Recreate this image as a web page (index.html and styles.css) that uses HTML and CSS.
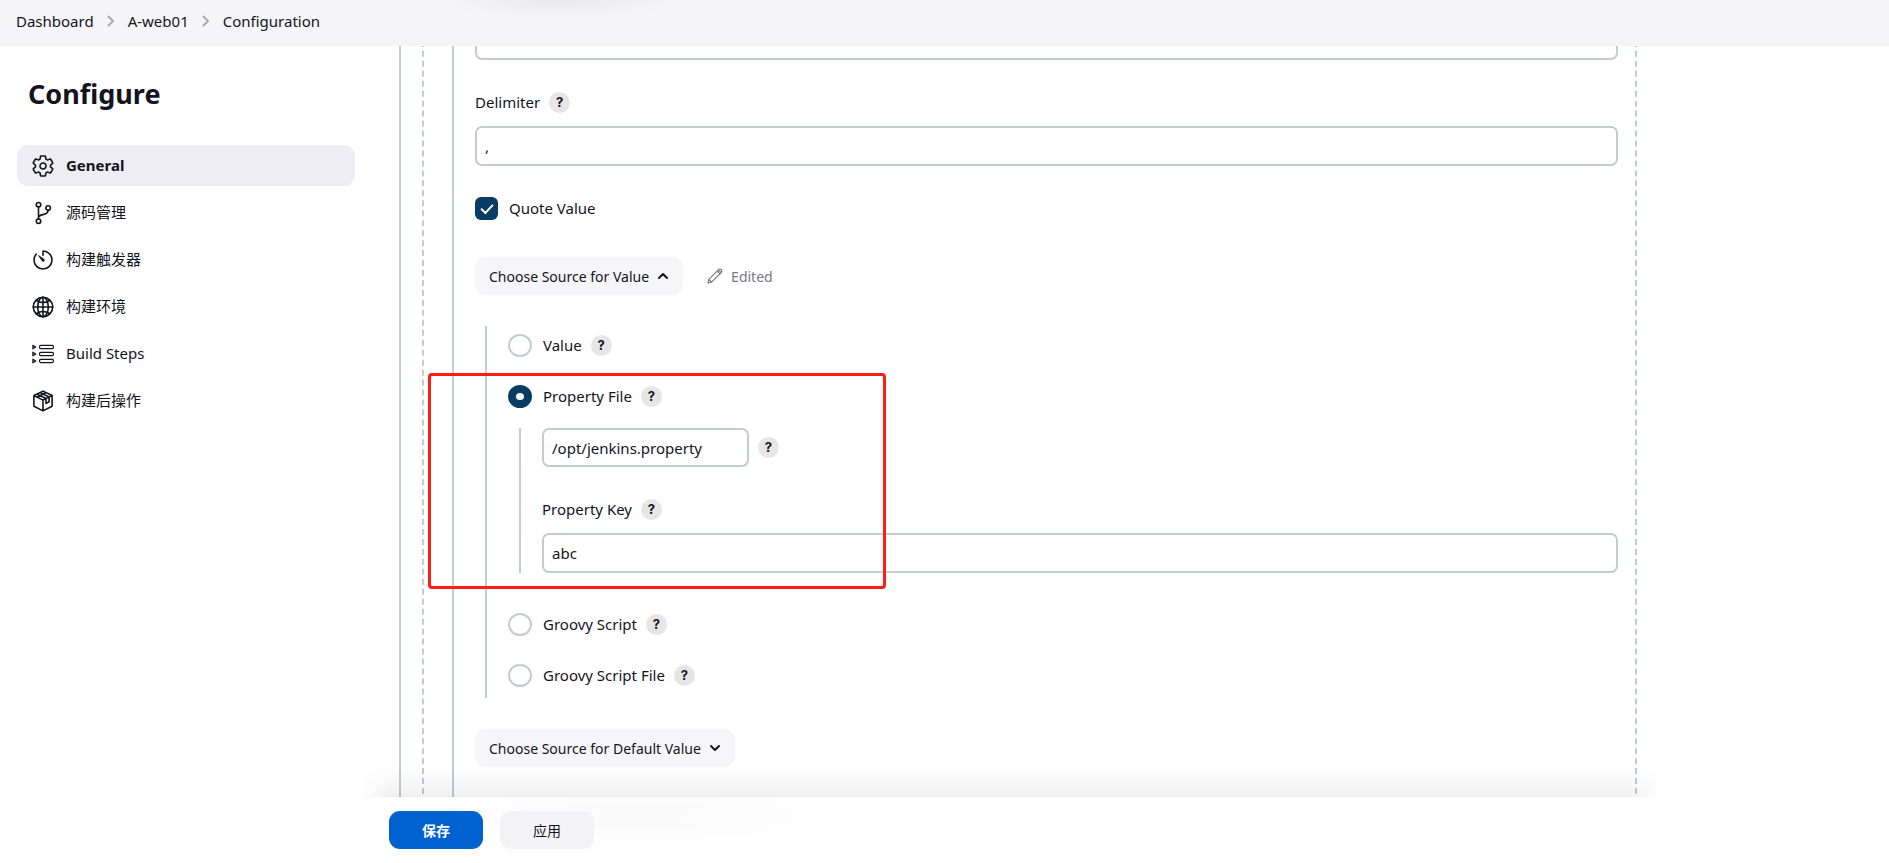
FILE: index.html
```
<!DOCTYPE html>
<html lang="zh-CN">
<head>
<meta charset="utf-8">
<title>A-web01 Configuration</title>
<link rel="stylesheet" href="styles.css">
</head>
<body>
<header class="topbar">
  <nav class="breadcrumbs" aria-label="Breadcrumbs">
    <a href="#">Dashboard</a>
    <svg class="crumb-sep" viewBox="0 0 8 12"><path d="M1.5 1.5 6 6l-4.500 4.500"/></svg>
    <a href="#">A-web01</a>
    <svg class="crumb-sep" viewBox="0 0 8 12"><path d="M1.5 1.500 6 6l-4.500 4.500"/></svg>
    <a href="#">Configuration</a>
  </nav>
</header>
<div class="page">
  <aside class="sidebar">
    <h1>Configure</h1>
    <nav class="tasks" aria-label="Sections">
      <a class="task active" href="#">
        <svg viewBox="0 0 512 512"><path d="M262.29 192.31a64 64 0 1057.4 57.4 64.13 64.13 0 00-57.4-57.4zM416.39 256a154.34 154.34 0 01-1.530 20.790l45.210 35.460a10.810 10.810 0 012.450 13.750l-42.770 74a10.810 10.810 0 01-13.140 4.590l-44.900-18.080a16.110 16.110 0 00-15.170 1.750A164.480 164.480 0 01325 400.800a15.940 15.940 0 00-8.820 12.140l-6.730 47.890a11.080 11.080 0 01-10.680 9.170h-85.540a11.110 11.110 0 01-10.690-8.870l-6.720-47.820a16.070 16.070 0 00-9-12.220 155.300 155.300 0 01-21.460-12.570 16 16 0 00-15.110-1.710l-44.890 18.070a10.810 10.810 0 01-13.140-4.580l-42.770-74a10.800 10.800 0 012.450-13.750l38.210-30a16.050 16.050 0 006-14.080c-.36-4.170-.58-8.330-.58-12.500s.21-8.270.58-12.350a16 16 0 00-6.070-13.940l-38.190-30A10.810 10.810 0 0149.480 186l42.770-74a10.810 10.810 0 0113.140-4.590l44.900 18.080a16.110 16.110 0 0015.170-1.750A164.480 164.480 0 01187 111.200a15.940 15.940 0 008.820-12.140l6.730-47.890A11.080 11.080 0 01213.230 42h85.540a11.110 11.110 0 0110.690 8.870l6.720 47.820a16.070 16.070 0 009 12.220 155.300 155.300 0 0121.460 12.570 16 16 0 0015.110 1.710l44.890-18.070a10.810 10.810 0 0113.140 4.580l42.770 74a10.800 10.800 0 01-2.450 13.750l-38.210 30a16.050 16.050 0 00-6.050 14.080c.33 4.140.55 8.300.55 12.470z"/></svg>
        <span>General</span>
      </a>
      <a class="task" href="#">
        <svg viewBox="0 0 512 512"><circle cx="160" cy="80" r="48"/><circle cx="160" cy="432" r="48"/><circle cx="366" cy="150" r="48"/><path d="M160 384V128M366 198c0 136-206 54-206 162"/></svg>
        <span>源码管理</span>
      </a>
      <a class="task" href="#">
        <svg viewBox="0 0 512 512"><path d="M112.910 128A191.850 191.850 0 0064 254c-1.180 106.350 85.650 193.800 192 194 106.200.2 192-85.830 192-192 0-104.540-83.550-189.610-187.500-192a4.360 4.360 0 00-4.500 4.370V152"/><path class="solid" d="M233.380 278.630l-79-113a8.130 8.130 0 0111.320-11.320l113 79a32.500 32.500 0 01-37.250 53.260 33.210 33.210 0 01-8.070-7.940z"/></svg>
        <span>构建触发器</span>
      </a>
      <a class="task" href="#">
        <svg viewBox="0 0 512 512"><circle cx="256" cy="256" r="208"/><ellipse cx="256" cy="256" rx="113" ry="208"/><path d="M117 117c38 27 87 44 139 44s101-17 139-44M395 395c-38-27-87-44-139-44s-101 17-139 44M256 48v416M464 256H48"/></svg>
        <span>构建环境</span>
      </a>
      <a class="task" href="#">
        <svg class="thin" viewBox="0 0 512 512"><path d="M40 70v76l62-38zM40 218v76l62-38zM40 366v76l62-38z"/><rect x="182" y="74" width="296" height="68" rx="26"/><rect x="182" y="222" width="296" height="68" rx="26"/><rect x="182" y="370" width="296" height="68" rx="26"/></svg>
        <span>Build Steps</span>
      </a>
      <a class="task" href="#">
        <svg viewBox="0 0 512 512"><path d="M256 46 450 140v228L256 466 62 368V140zM62 140l194 98 194-98M256 238v228M126 106l194 98v104l66-36V170L194 76M126 176 322 76"/></svg>
        <span>构建后操作</span>
      </a>
    </nav>
  </aside>
  <main class="main">
    <form class="scroller" id="config">
      <div class="step"><div class="chunk"><div class="inner">
        <input class="text" type="text" aria-label="Parameter value">
        <div class="label-row field-gap">
          <label for="delimiter">Delimiter</label>
          <button type="button" class="help" aria-label="Help for Delimiter">?</button>
        </div>
        <input class="text label-gap" id="delimiter" type="text" value=",">
        <label class="choice block-gap"><input type="checkbox" checked>Quote Value</label>
        <div class="button-row quote-gap">
          <button type="button" class="button">Choose Source for Value
            <svg viewBox="0 0 12 12"><path d="M2 8l4-4 4 4"/></svg>
          </button>
          <span class="edited">
            <svg viewBox="0 0 512 512"><path d="M364 58 58 366 34 478l112-24L454 148zM58 366l88 88M326 96l90 90M364 58c22-34 66-32 88-10s30 60 2 100"/></svg>
            Edited
          </span>
        </div>
        <div class="options block-gap">
          <div class="label-row">
            <label class="choice"><input type="radio" name="source">Value</label>
            <button type="button" class="help" aria-label="Help for Value">?</button>
          </div>
          <div class="label-row option-gap">
            <label class="choice"><input type="radio" name="source" checked>Property File</label>
            <button type="button" class="help" aria-label="Help for Property File">?</button>
          </div>
          <div class="nested">
            <div class="label-row">
              <input class="text short" type="text" value="/opt/jenkins.property" aria-label="Property File path">
              <button type="button" class="help" aria-label="Help for path">?</button>
            </div>
            <div class="label-row field-gap">
              <label for="key">Property Key</label>
              <button type="button" class="help" aria-label="Help for Property Key">?</button>
            </div>
            <input class="text label-gap" id="key" type="text" value="abc">
          </div>
          <div class="label-row">
            <label class="choice"><input type="radio" name="source">Groovy Script</label>
            <button type="button" class="help" aria-label="Help for Groovy Script">?</button>
          </div>
          <div class="label-row option-gap">
            <label class="choice"><input type="radio" name="source">Groovy Script File</label>
            <button type="button" class="help" aria-label="Help for Groovy Script File">?</button>
          </div>
          <div class="highlight"></div>
        </div>
        <div class="button-row block-gap">
          <button type="button" class="button">Choose Source for Default Value
            <svg viewBox="0 0 12 12"><path d="M2 4l4 4 4-4"/></svg>
          </button>
        </div>
      </div></div></div>
    </form>
    <footer class="actions">
      <button class="action primary" type="submit" form="config">保存</button>
      <button class="action" type="button">应用</button>
    </footer>
  </main>
</div>
</body>
</html>
```
FILE: styles.css
```
* { box-sizing: border-box; }

body {
  margin: 0;
  height: 100vh;
  display: flex;
  flex-direction: column;
  overflow: hidden;
  background: #fff;
  color: #14141f;
  font: 15px/21px "Noto Sans", "Noto Sans CJK SC", sans-serif;
}

a { color: inherit; text-decoration: none; }
button, input { font: inherit; color: inherit; margin: 0; }
svg { flex: none; fill: none; stroke: currentColor; stroke-linecap: round; stroke-linejoin: round; }

.topbar {
  flex: none;
  height: 46px;
  padding: 0 16px;
  display: flex;
  align-items: center;
  background: radial-gradient(120px 18px at 558px 0, #e9e9ed, #f5f5f800), #f5f5f8;
}
.breadcrumbs { display: flex; align-items: center; gap: 13px; padding-bottom: 4px; }
.crumb-sep { width: 8px; height: 12px; color: #a9a9b8; stroke-width: 2; }

.page { flex: 1; min-height: 0; display: flex; }

.sidebar { flex: none; width: 372px; padding: 29px 17px; }
h1 { margin: 0 0 33px; padding-left: 11px; font-size: 27px; line-height: 37px; font-weight: 700; }
.tasks { display: flex; flex-direction: column; gap: 6px; }
.task {
  display: flex;
  align-items: center;
  gap: 11px;
  height: 41px;
  padding: 0 14px;
  border-radius: 11px;
}
.task svg { width: 24px; height: 24px; stroke-width: 34; }
.task .thin { stroke-width: 26; }
.task .solid { fill: currentColor; stroke: none; }
.active { background: #ededf3; font-weight: 700; }

.main { flex: 1; min-width: 0; display: flex; flex-direction: column; }
.scroller { flex: 1; min-height: 0; overflow: hidden; padding: 0 252px 0 27px; }
.step { margin-top: -35px; padding-left: 21px; border-left: 2px solid #c3ccd1; }
.chunk { padding: 0 17px 0 28px; border: 0 dashed #c3ccd1; border-width: 0 2px; }
.inner { padding: 9px 0 37px 21px; border-left: 2px solid #c3ccd1; }

.text {
  display: block;
  width: 100%;
  height: 40px;
  padding: 0 8px;
  border: 2px solid #c3ccd1;
  border-radius: 7px;
  background: #fff;
  outline: 0;
}
.short { width: 207px; height: 39px; }
.label-row { display: flex; align-items: center; gap: 9px; }
.field-gap { margin-top: 32px; }
.label-gap { margin-top: 13px; }
.block-gap { margin-top: 31px; }
.quote-gap { margin-top: 37px; }
.option-gap { margin-top: 28px; }

.help {
  width: 21px;
  height: 21px;
  padding: 0;
  border: 0;
  border-radius: 50%;
  background: #e6e6e6;
  font: 700 13px/21px Inter, sans-serif;
}

.choice { display: flex; align-items: center; gap: 11px; height: 23px; }
.choice input { appearance: none; flex: none; width: 23px; height: 23px; }
.choice [type="checkbox"] { border-radius: 6px; background: #063d61; display: grid; place-items: center; }
.choice [type="checkbox"]::after {
  content: "";
  width: 10px;
  height: 5px;
  margin-bottom: 3px;
  border: solid #fff;
  border-width: 0 0 2px 2px;
  transform: rotate(-47deg);
}
.choice [type="radio"] { width: 24px; border: 2px solid #c3ccd1; border-radius: 50%; }
.choice [type="radio"]:checked { border: 8px solid #063d61; }

.button-row { display: flex; align-items: center; gap: 24px; }
.button {
  display: flex;
  align-items: center;
  gap: 8px;
  height: 38px;
  padding: 0 14px;
  border: 0;
  border-radius: 11px;
  background: #f6f6f9;
  font-size: 14px;
}
.button svg { width: 12px; height: 12px; stroke-width: 2; }
.edited { display: flex; align-items: center; gap: 8px; color: #787887; font-size: 14px; }
.edited svg { width: 16px; height: 16px; stroke-width: 36; }

.options {
  position: relative;
  margin-left: 10px;
  padding: 8px 0 11px 21px;
  border-left: 2px solid #c3ccd1;
}
.nested {
  margin: 20px 0 40px 11px;
  padding-left: 21px;
  border-left: 2px solid #c3ccd1;
}
.highlight {
  position: absolute;
  left: -59px;
  top: 47px;
  width: 458px;
  height: 216px;
  border: 3px solid #ff1f12;
  border-radius: 4px;
  pointer-events: none;
}

.actions {
  position: relative;
  flex: none;
  display: flex;
  gap: 17px;
  padding: 14px 17px;
  background: radial-gradient(200px 30px at 270px 18px, #f9f9f9, #fff);
}
/* Shadow cast upwards over the form */
.actions::before {
  content: "";
  position: absolute;
  left: -12px;
  right: 228px;
  bottom: 100%;
  height: 30px;
  background: linear-gradient(#0000, #0000000f);
  mask-image: linear-gradient(90deg, #0000, #000 32px calc(100% - 32px), #0000);
  pointer-events: none;
}
.action {
  width: 94px;
  height: 38px;
  border: 0;
  border-radius: 11px;
  background: #f3f3f6;
  font-size: 14px;
}
.primary { background: #0062d1; color: #fff; font-weight: 700; }
```
